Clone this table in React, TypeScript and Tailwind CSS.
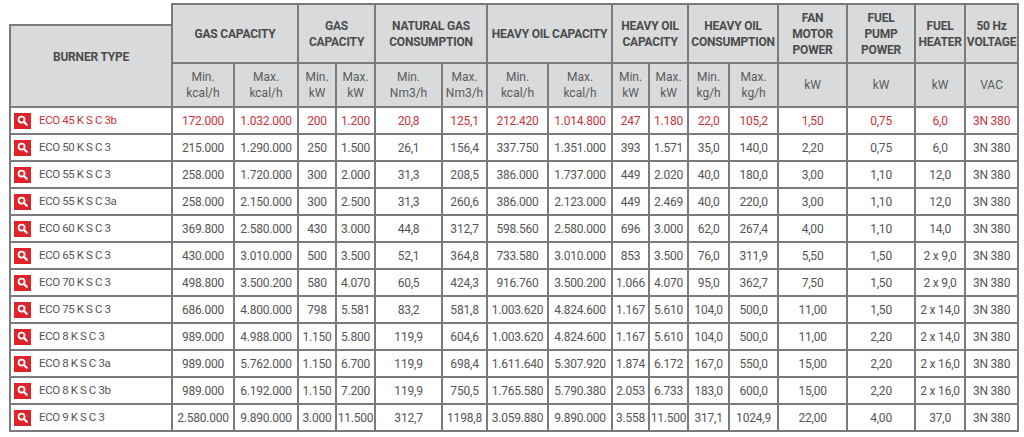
const cols = [162, 62, 64, 38, 39, 67, 45, 61, 64, 37, 39, 41, 49, 69, 68, 50, 53];

const rows: string[][] = [
  ["ECO 45 K S C 3b", "172.000", "1.032.000", "200", "1.200", "20,8", "125,1", "212.420", "1.014.800", "247", "1.180", "22,0", "105,2", "1,50", "0,75", "6,0", "3N 380"],
  ["ECO 50 K S C 3", "215.000", "1.290.000", "250", "1.500", "26,1", "156,4", "337.750", "1.351.000", "393", "1.571", "35,0", "140,0", "2,20", "0,75", "6,0", "3N 380"],
  ["ECO 55 K S C 3", "258.000", "1.720.000", "300", "2.000", "31,3", "208,5", "386.000", "1.737.000", "449", "2.020", "40,0", "180,0", "3,00", "1,10", "12,0", "3N 380"],
  ["ECO 55 K S C 3a", "258.000", "2.150.000", "300", "2.500", "31,3", "260,6", "386.000", "2.123.000", "449", "2.469", "40,0", "220,0", "3,00", "1,10", "12,0", "3N 380"],
  ["ECO 60 K S C 3", "369.800", "2.580.000", "430", "3.000", "44,8", "312,7", "598.560", "2.580.000", "696", "3.000", "62,0", "267,4", "4,00", "1,10", "14,0", "3N 380"],
  ["ECO 65 K S C 3", "430.000", "3.010.000", "500", "3.500", "52,1", "364,8", "733.580", "3.010.000", "853", "3.500", "76,0", "311,9", "5,50", "1,50", "2 x 9,0", "3N 380"],
  ["ECO 70 K S C 3", "498.800", "3.500.200", "580", "4.070", "60,5", "424,3", "916.760", "3.500.200", "1.066", "4.070", "95,0", "362,7", "7,50", "1,50", "2 x 9,0", "3N 380"],
  ["ECO 75 K S C 3", "686.000", "4.800.000", "798", "5.581", "83,2", "581,8", "1.003.620", "4.824.600", "1.167", "5.610", "104,0", "500,0", "11,00", "1,50", "2 x 14,0", "3N 380"],
  ["ECO 8 K S C 3", "989.000", "4.988.000", "1.150", "5.800", "119,9", "604,6", "1.003.620", "4.824.600", "1.167", "5.610", "104,0", "500,0", "11,00", "2,20", "2 x 14,0", "3N 380"],
  ["ECO 8 K S C 3a", "989.000", "5.762.000", "1.150", "6.700", "119,9", "698,4", "1.611.640", "5.307.920", "1.874", "6.172", "167,0", "550,0", "15,00", "2,20", "2 x 16,0", "3N 380"],
  ["ECO 8 K S C 3b", "989.000", "6.192.000", "1.150", "7.200", "119,9", "750,5", "1.765.580", "5.790.380", "2.053", "6.733", "183,0", "600,0", "15,00", "2,20", "2 x 16,0", "3N 380"],
  ["ECO 9 K S C 3", "2.580.000", "9.890.000", "3.000", "11.500", "312,7", "1198,8", "3.059.880", "9.890.000", "3.558", "11.500", "317,1", "1024,9", "22,00", "4,00", "37,0", "3N 380"],
];

const groups: { label: string[]; span: number }[] = [
  { label: ["GAS CAPACITY"], span: 2 },
  { label: ["GAS", "CAPACITY"], span: 2 },
  { label: ["NATURAL GAS", "CONSUMPTION"], span: 2 },
  { label: ["HEAVY OIL CAPACITY"], span: 2 },
  { label: ["HEAVY OIL", "CAPACITY"], span: 2 },
  { label: ["HEAVY OIL", "CONSUMPTION"], span: 2 },
  { label: ["FAN", "MOTOR", "POWER"], span: 1 },
  { label: ["FUEL", "PUMP", "POWER"], span: 1 },
  { label: ["FUEL", "HEATER"], span: 1 },
  { label: ["50 Hz", "VOLTAGE"], span: 1 },
];

const subs: string[][] = [
  ["Min.", "kcal/h"], ["Max.", "kcal/h"],
  ["Min.", "kW"], ["Max.", "kW"],
  ["Min.", "Nm3/h"], ["Max.", "Nm3/h"],
  ["Min.", "kcal/h"], ["Max.", "kcal/h"],
  ["Min.", "kW"], ["Max.", "kW"],
  ["Min.", "kg/h"], ["Max.", "kg/h"],
  ["kW"], ["kW"], ["kW"], ["VAC"],
];

function SearchIcon() {
  return (
    <span className="flex h-[16px] w-[17px] shrink-0 items-center justify-center bg-[#e0222b]">
      <svg width="11" height="11" viewBox="0 0 12 12" fill="none">
        <circle cx="5" cy="5" r="3.3" stroke="white" strokeWidth="2" />
        <line x1="7.6" y1="7.6" x2="10.6" y2="10.6" stroke="white" strokeWidth="2.4" strokeLinecap="round" />
      </svg>
    </span>
  );
}

export default function App() {
  return (
    <div className="min-h-screen bg-white pl-[9px] pt-[3px] font-['Roboto',sans-serif]">
      <table className="table-fixed border-collapse" style={{ width: 1009 }}>
        <colgroup>
          {cols.map((w, i) => (
            <col key={i} style={{ width: w }} />
          ))}
        </colgroup>
        <thead>
          <tr className="h-[21px]">
            <td className="p-0" />
            {groups.map((g, i) => (
              <th
                key={i}
                rowSpan={2}
                colSpan={g.span}
                className="border-2 border-[#7b7b7b] bg-[#d9dadb] p-0 text-center align-middle text-[12px] font-bold leading-[16px] tracking-[-0.2px] text-[#4b4b4b]"
              >
                {g.label.map((l, j) => (
                  <div key={j} className="whitespace-nowrap">{l}</div>
                ))}
              </th>
            ))}
          </tr>
          <tr className="h-[38px]">
            <th
              rowSpan={2}
              className="border-2 border-[#7b7b7b] bg-[#d9dadb] p-0 pb-[18px] text-center align-middle text-[12px] font-bold tracking-[-0.2px] text-[#4b4b4b]"
            >
              BURNER TYPE
            </th>
          </tr>
          <tr className="h-[44px]">
            {subs.map((s, i) => (
              <th
                key={i}
                className="border-2 border-[#7b7b7b] bg-[#d9dadb] p-0 text-center align-middle text-[12px] font-normal leading-[16px] text-[#5a5a5a]"
              >
                {s.map((l, j) => (
                  <div key={j} className="whitespace-nowrap">{l}</div>
                ))}
              </th>
            ))}
          </tr>
        </thead>
        <tbody>
          {rows.map((r, i) => {
            const red = i === 0;
            return (
              <tr key={i} className="h-[27px]">
                {r.map((v, j) =>
                  j === 0 ? (
                    <td key={j} className="border-2 border-[#7b7b7b] p-0 pl-[3px]">
                      <div className="flex items-center gap-[8px]">
                        <SearchIcon />
                        <span
                          className={`whitespace-nowrap text-[11.5px] tracking-[-0.4px] ${red ? "text-[#c9343c]" : "text-[#555555]"}`}
                        >
                          {v}
                        </span>
                      </div>
                    </td>
                  ) : (
                    <td
                      key={j}
                      className={`whitespace-nowrap border-2 border-[#7b7b7b] p-0 text-center text-[12px] tracking-[-0.2px] ${red ? "text-[#c9343c]" : "text-[#555555]"}`}
                    >
                      {v}
                    </td>
                  )
                )}
              </tr>
            );
          })}
        </tbody>
      </table>
    </div>
  );
}
